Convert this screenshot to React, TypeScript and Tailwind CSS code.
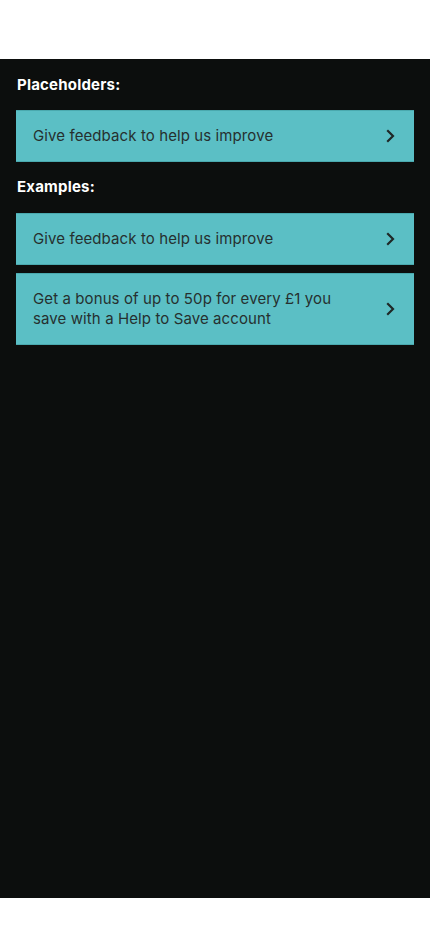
function Chevron() {
  return (
    <svg width="10" height="14" viewBox="0 0 10 14" fill="none" className="shrink-0">
      <path d="M3 2l5 5-5 5" stroke="#1f2827" strokeWidth="2.2" strokeLinecap="square" />
    </svg>
  );
}

function Card({ text }: { text: string }) {
  return (
    <div className="flex items-center justify-between bg-[#5bbfc5] border-y border-[#4aa9ae] pl-[17px] pr-[19px] py-[15px]">
      <p className="text-[15px] leading-[20px] tracking-[0.1px] text-[#26302f] pr-8">{text}</p>
      <Chevron />
    </div>
  );
}

export default function App() {
  return (
    <div className="flex flex-col h-[932px] bg-white" style={{ fontFamily: "Inter, 'Noto Sans', sans-serif" }}>
      <div className="h-[59px]" />
      <div className="h-[839px] bg-[#0c0e0d] px-4 pt-4">
        <h2 className="text-[15px] leading-[20px] font-bold tracking-[0.2px] text-white pl-px">Placeholders:</h2>
        <div className="mt-[15px]">
          <Card text="Give feedback to help us improve" />
        </div>
        <h2 className="mt-[15px] text-[15px] leading-[20px] font-bold tracking-[0.2px] text-white pl-px">Examples:</h2>
        <div className="mt-4 flex flex-col gap-2">
          <Card text="Give feedback to help us improve" />
          <Card text="Get a bonus of up to 50p for every £1 you save with a Help to Save account" />
        </div>
      </div>
    </div>
  );
}
